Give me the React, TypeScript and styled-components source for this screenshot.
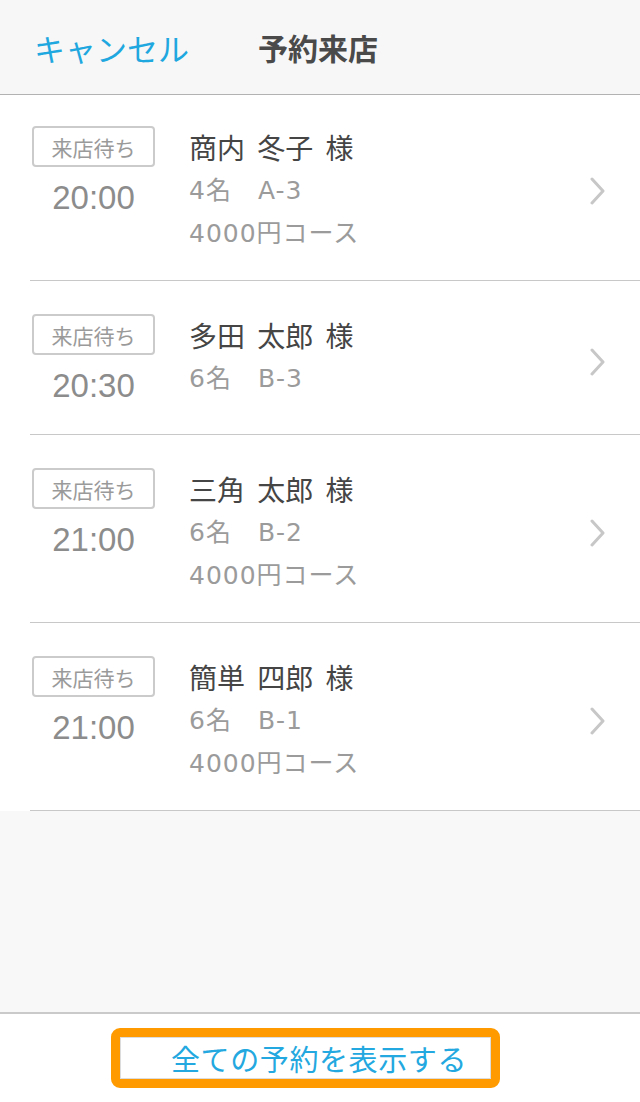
import styled, { createGlobalStyle } from "styled-components";

const GlobalStyle = createGlobalStyle`
  html, body {
    margin: 0;
    padding: 0;
    background: #f8f8f8;
  }
  body {
    font-family: "Noto Sans CJK JP", "Noto Sans", sans-serif;
  }
`;

const Page = styled.div`
  display: flex;
  flex-direction: column;
  width: 640px;
  height: 1102px;
  background: #f8f8f8;
`;

const Header = styled.header`
  display: flex;
  align-items: center;
  height: 95px;
  border-bottom: 1px solid #b2b2b2;
  background: #f7f7f7;
  padding: 0 0 0 34px;
  box-sizing: border-box;
  flex-shrink: 0;
`;

const CancelButton = styled.span`
  font-size: 31px;
  color: #1fa7e0;
  width: 224px;
  line-height: 1;
`;

const Title = styled.h1`
  margin: 0;
  font-size: 30px;
  font-weight: 700;
  color: #4a4a4a;
  line-height: 1;
`;

const List = styled.ul`
  list-style: none;
  margin: 0;
  padding: 0;
  background: #fff;
`;

const Row = styled.li<{ $first?: boolean }>`
  position: relative;
  display: flex;
  align-items: flex-start;
  padding: ${(p) => (p.$first ? "31px" : "33px")} 34px 26px 32px;
  &::after {
    content: "";
    position: absolute;
    left: 30px;
    right: 0;
    bottom: 0;
    border-bottom: 1px solid #c8c8c8;
  }
`;

const LeftCol = styled.div`
  display: flex;
  flex-direction: column;
  align-items: center;
  width: 123px;
  flex-shrink: 0;
`;

const Badge = styled.div`
  box-sizing: border-box;
  width: 123px;
  height: 41px;
  border: 2px solid #cbcbcb;
  border-radius: 4px;
  display: flex;
  align-items: center;
  justify-content: center;
  font-size: 21px;
  color: #9a9a9a;
`;

const Time = styled.div`
  margin-top: 8px;
  font-family: "Liberation Sans", "Noto Sans", sans-serif;
  font-size: 33px;
  line-height: 46px;
  color: #8c8c8c;
`;

const Info = styled.div`
  flex: 1;
  margin-left: 34px;
`;

const Name = styled.div`
  font-size: 28px;
  line-height: 43px;
  color: #454545;
  word-spacing: 6px;
`;

const Sub = styled.div`
  font-family: "DejaVu Sans", "Noto Sans CJK JP", sans-serif;
  font-size: 25px;
  line-height: 43px;
  letter-spacing: 1px;
  color: #9b9b9b;
  white-space: pre;
`;

const Chevron = styled.svg`
  align-self: center;
  width: 16px;
  height: 28px;
  flex-shrink: 0;
`;

const Spacer = styled.div`
  flex: 1;
  background: #f8f8f8;
`;

const Footer = styled.footer`
  height: 90px;
  flex-shrink: 0;
  border-top: 2px solid #cacaca;
  background: #fff;
  display: flex;
  align-items: center;
  justify-content: center;
  box-sizing: border-box;
`;

const ShowAll = styled.div`
  box-sizing: border-box;
  width: 389px;
  height: 60px;
  border: 9px solid #ff9b00;
  border-radius: 9px;
  box-shadow: inset 0 0 0 1px #dcdcdc;
  display: flex;
  align-items: center;
  padding-left: 51px;
  margin-right: 29px;
  font-size: 29px;
  color: #23a8e0;
  letter-spacing: 0.6px;
`;

type Reservation = {
  name: string;
  time: string;
  party: string;
  course?: string;
};

const reservations: Reservation[] = [
  { name: "商内 冬子 様", time: "20:00", party: "4名　A-3", course: "4000円コース" },
  { name: "多田 太郎 様", time: "20:30", party: "6名　B-3" },
  { name: "三角 太郎 様", time: "21:00", party: "6名　B-2", course: "4000円コース" },
  { name: "簡単 四郎 様", time: "21:00", party: "6名　B-1", course: "4000円コース" },
];

export default function App() {
  return (
    <>
      <GlobalStyle />
      <Page>
        <Header>
          <CancelButton>キャンセル</CancelButton>
          <Title>予約来店</Title>
        </Header>
        <List>
          {reservations.map((r, i) => (
            <Row key={i} $first={i === 0}>
              <LeftCol>
                <Badge>来店待ち</Badge>
                <Time>{r.time}</Time>
              </LeftCol>
              <Info>
                <Name>{r.name}</Name>
                <Sub>{r.party}</Sub>
                {r.course && <Sub>{r.course}</Sub>}
              </Info>
              <Chevron viewBox="0 0 16 28">
                <path d="M2 2 L13 14 L2 26" fill="none" stroke="#c7c7c7" strokeWidth="3" strokeLinecap="round" strokeLinejoin="round" />
              </Chevron>
            </Row>
          ))}
        </List>
        <Spacer />
        <Footer>
          <ShowAll>全ての予約を表示する</ShowAll>
        </Footer>
      </Page>
    </>
  );
}
